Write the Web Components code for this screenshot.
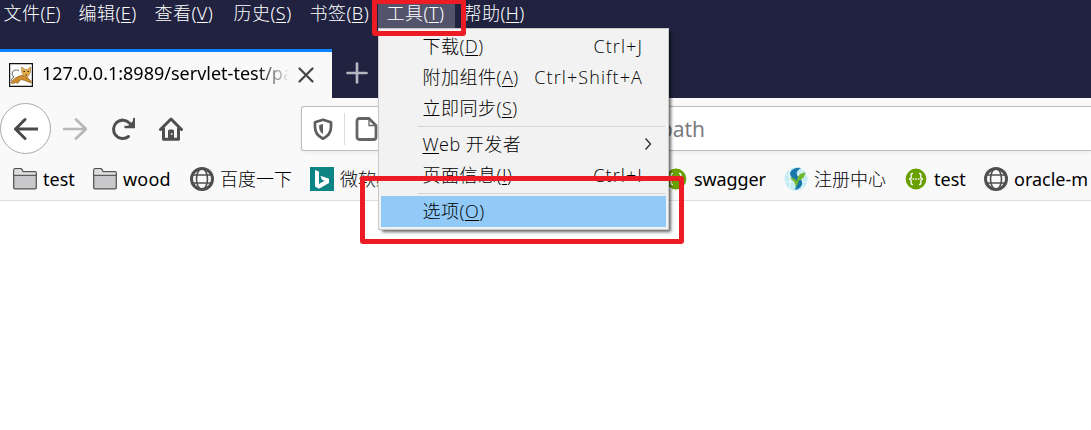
<!DOCTYPE html>
<html lang="zh-CN">
<head>
<meta charset="utf-8">
<title>Browser</title>
<style>
html,body{margin:0;height:100%;background:#fff;overflow:hidden}
body{font:18px/24px "Noto Sans","Noto Sans CJK SC",sans-serif;color:#000}
</style>
</head>
<body>
<browser-window></browser-window>
<script>
const define = (name, html, init) => customElements.define(name, class extends HTMLElement {
  connectedCallback() {
    if (this.shadowRoot) return;
    const t = document.createElement('template');
    t.innerHTML = html;
    const root = this.attachShadow({ mode: 'open' });
    root.append(t.content.cloneNode(true));
    if (init) init(this, root);
  }
});

const icons = {
  back: '<g fill="none" stroke="#4a4a4c" stroke-width="3" stroke-linecap="round" stroke-linejoin="round"><path d="M1.500 12H23.500M11 2.500L1.500 12L11 21.500"/></g>',
  forward: '<g fill="none" stroke="#b7b7b9" stroke-width="2.700" stroke-linecap="round" stroke-linejoin="round"><path d="M1 12H23M13 2.500L23 12L13 21.500"/></g>',
  reload: '<path d="M17.500 19.500A9.200 9.200 0 1 1 18.600 6.200" fill="none" stroke="#4f4f51" stroke-width="3" stroke-linecap="round"/><path d="M23.200 2V10H14.500" fill="none" stroke="#4f4f51" stroke-width="2.500" stroke-linejoin="round" stroke-linecap="round"/><path d="M23 3V10H16Z" fill="#4f4f51"/>',
  home: '<path d="M1.500 12.500L12 2L22.500 12.500M4.500 11V22.300H19.500V11" fill="none" stroke="#4f4f51" stroke-width="3" stroke-linecap="round" stroke-linejoin="round"/><path d="M9 22V14Q9 12.500 10.500 12.500H13.500Q15 12.500 15 14V22Z" fill="#4f4f51"/><circle cx="12.700" cy="17" r="1" fill="#ddd"/>',
  shield: '<path d="M12 2.800L20 5.300V10C20 15.500 17.500 19 12 21.700C6.500 19 4 15.500 4 10V5.300Z" fill="none" stroke="#5d5d5f" stroke-width="2.700" stroke-linejoin="round"/><path d="M12 7V17C9.500 15.500 8.200 13.500 8.200 10.500V8Z" fill="#5d5d5f"/>',
  page: '<path d="M4.500 1.500H14L21 8.500V20Q21 22.500 18.500 22.500H4.500Q2 22.500 2 20V4Q2 1.500 4.500 1.500Z" fill="none" stroke="#656567" stroke-width="2.800" stroke-linejoin="round"/><path d="M14 2V8.500H20.500" fill="none" stroke="#656567" stroke-width="1.300"/>',
  folder: '<path d="M.7 20.500V3.200Q.7 1.700 2.200 1.700H7.500Q8.700 1.700 9.200 2.700L10.200 4.700H22Q23.300 4.700 23.300 6V20.500Q23.300 21.800 22 21.800H2Q.7 21.800.7 20.500Z" fill="#c9c9cb" stroke="#505052" stroke-width="1.250"/><path d="M.7 8.300H23.300" stroke="#505052" stroke-width="1.200"/><path d="M1.400 7.500V3Q1.400 2.300 2.200 2.300H7.500L9.500 5.500H22.500V7.500Z" fill="#dededf"/>',
  globe: '<g fill="none" stroke="#4f4f51"><circle cx="12" cy="12" r="10.500" stroke-width="3"/><ellipse cx="12" cy="12" rx="5.500" ry="10.500" stroke-width="1.600"/><path d="M2.500 8H21.500M2.500 16H21.500" stroke-width="1.600"/></g>',
  bing: '<path fill="#0c8484" d="M0 0H24V24H0Z"/><path fill="#fff" d="M5 3L9 4.400V17L14.500 13.800L11.900 12.600L10.400 8.800L19 11.800V16L9 21.700L5 19.500Z"/>',
  swagger: '<circle cx="12" cy="12" r="10.400" fill="#6a9f00"/><g fill="none" stroke="#fff" stroke-width="1.300"><path d="M9 6.500C6.500 6.300 7.200 8 7.200 10Q7.200 12 5 12Q7.200 12 7.200 14C7.200 16 6.500 17.700 9 17.500M15 6.500C17.500 6.300 16.800 8 16.800 10Q16.800 12 19 12Q16.800 12 16.800 14C16.800 16 17.500 17.700 15 17.500"/><path d="M8.700 12H15.500" stroke-dasharray="1.500 1.200"/></g>',
  registry: '<circle cx="12" cy="12" r="11.500" fill="#c4ebf3"/><path d="M1 8H23M1 15H23M6 2V21M18 3V21" stroke="#e8fafd" stroke-width="1.200"/><path fill="#1877ab" d="M17 1C9 0 4 5 7 9.500C9.500 13 14.500 14.500 11 23C18 21.500 20.500 15.500 16 11.500C12 8 11 4.500 17 1Z"/><path fill="#72b72d" d="M11.500 20C12.500 15 8 14 6 10.500C10 11 12 12 13 14.500C13 9 16 6 21.500 5.500C20.500 10.500 18 13 14.500 13.500Q14.500 17.500 11.500 20Z"/>',
  tomcat: '<path fill="#fff" stroke="#111" stroke-width="1.200" d="M.6.6H23.400V23.400H.6Z"/><path d="M10 7.500Q5 6 3.500 9T5 14Q2.500 15 2 18" fill="none" stroke="#555" stroke-width=".9"/><path fill="#cf8a2a" stroke="#6c501c" stroke-width=".5" d="M1.500 20Q5 14.500 11.500 12.500L14 12.500L18 14L22.500 18.500L22 20L15.500 17.500L12 16.500L8.500 20.500L7 19.500L4 20.500Z"/><path fill="#e3ad4c" stroke="#8a6420" stroke-width=".5" d="M12.500 4L16 6.500H18.500L21.500 4L21.500 9L19.500 13L17 14.500L14.500 13L12.800 9Z"/><path d="M14.500 8.500h1.500M18.500 8.500h1.500M16.500 12h1.500" stroke="#222"/>',
  close: '<path d="M5.500 5.500L18.500 18.500M18.500 5.500L5.500 18.500" stroke="#47474a" stroke-width="2.300" stroke-linecap="round"/>',
  plus: '<path d="M12 2.500V21.500M2.500 12H21.500" stroke="#b6b6c1" stroke-width="2.700" stroke-linecap="round"/>',
  chevron: '<path d="M9.500 6.500L14.500 12L9.500 17.500" fill="none" stroke="#333" stroke-width="1.400"/>'
};

define('ui-icon', '<style>:host{display:block;width:24px;height:24px;flex:none}svg{display:block;width:100%;height:100%}</style><svg viewBox="0 0 24 24" aria-hidden="true"></svg>', (el, root) => {
  root.querySelector('svg').innerHTML = icons[el.getAttribute('name')];
});

define('menu-title', `<style>
:host{display:block;box-sizing:border-box;width:var(--w);height:28px;padding-left:var(--pad,8.500px);flex:none;white-space:nowrap;line-height:27px;color:#fff;font-weight:300;letter-spacing:.45px}
:host([active]){background:#53546c}
</style><slot></slot>`);

define('menu-bar', `<style>
:host{display:flex;height:28px;background:#20223f}
u{text-decoration-thickness:1px;text-underline-offset:2px}
</style>
<menu-title style="--w:70px;--pad:3.500px">文件(<u>F</u>)</menu-title>
<menu-title style="--w:76px">编辑(<u>E</u>)</menu-title>
<menu-title style="--w:79px">查看(<u>V</u>)</menu-title>
<menu-title style="--w:76px">历史(<u>S</u>)</menu-title>
<menu-title style="--w:77px">书签(<u>B</u>)</menu-title>
<menu-title active style="--w:77px">工具(<u>T</u>)</menu-title>
<menu-title style="--w:80px">帮助(<u>H</u>)</menu-title>`);

define('tab-strip', `<style>
:host{display:flex;height:70px;align-items:flex-end;background:#20223f}
.tab{display:flex;align-items:center;box-sizing:border-box;width:332px;height:49px;border-top:3px solid #0a84ff;background:#f9f9fa;padding-left:9px}
.label{width:250px;margin:-5px 0 0 9px;white-space:nowrap;-webkit-mask-image:linear-gradient(90deg,#000 86%,transparent 99%);mask-image:linear-gradient(90deg,#000 86%,transparent 99%)}
.close{margin-left:2px}.plus{margin:0 0 13px 13px}
</style>
<div class="tab"><ui-icon name="tomcat"></ui-icon><div class="label">127.0.0.1:8989/servlet-test/pa</div><ui-icon class="close" name="close"></ui-icon></div>
<ui-icon class="plus" name="plus"></ui-icon>`);

define('nav-bar', `<style>
:host{display:flex;align-items:center;height:61px;background:#f9f9fa}
.back{display:flex;align-items:center;justify-content:center;box-sizing:border-box;width:51px;height:51px;border:1px solid #ababad;border-radius:50%;background:#fff;flex:none}
.f{margin-left:12px}.r{margin-left:24px}.h{margin-left:24px}
.url{display:flex;align-items:center;box-sizing:border-box;height:45px;flex:1;margin-left:118px;border:1px solid #bdbdbf;border-right:0;border-radius:3px 0 0 3px;background:#fff;box-shadow:0 1px 4px #0001}
.shield{margin-left:9px}.line{width:1px;height:32px;background:#ddd;margin:0 10px 0 9px}
.text{margin-left:273px;font-size:21px;line-height:28px;color:#7b7b7d}
</style>
<div class="back"><ui-icon name="back"></ui-icon></div>
<ui-icon class="f" name="forward"></ui-icon><ui-icon class="r" name="reload"></ui-icon><ui-icon class="h" name="home"></ui-icon>
<div class="url"><ui-icon class="shield" name="shield"></ui-icon><div class="line"></div><ui-icon name="page"></ui-icon><div class="text">/path</div></div>`);

define('book-mark', `<style>
:host{display:flex;align-items:center;box-sizing:border-box;width:var(--w);flex:none;white-space:nowrap;font-weight:var(--fw,400)}
span{margin-left:6.500px;letter-spacing:var(--ls,0)}
</style><ui-icon></ui-icon><span><slot></slot></span>`, (el, root) => {
  const i = document.createElement('ui-icon');
  i.setAttribute('name', el.getAttribute('icon'));
  root.querySelector('ui-icon').replaceWith(i);
});

define('bookmark-bar', `<style>
:host{display:flex;box-sizing:border-box;height:42px;padding:0 0 2px 12.500px;overflow:hidden;background:#f9f9fa;border-bottom:1px solid #dedede}
</style>
<book-mark icon="folder" style="--w:80px">test</book-mark>
<book-mark icon="folder" style="--w:97px;--ls:.2px">wood</book-mark>
<book-mark icon="globe" style="--w:120px;--fw:300">百度一下</book-mark>
<book-mark icon="bing" style="--w:354px;--fw:300">微软必应</book-mark>
<book-mark icon="swagger" style="--w:120px;--ls:-.1px">swagger</book-mark>
<book-mark icon="registry" style="--w:120px;--fw:300">注册中心</book-mark>
<book-mark icon="swagger" style="--w:80px">test</book-mark>
<book-mark icon="globe" style="--w:107px">oracle-m</book-mark>`);

define('menu-item', `<style>
:host{display:flex;align-items:center;box-sizing:border-box;height:31px;padding:0 23px 2px 41.500px;margin:0 2px;white-space:nowrap;font-family:"Open Sans","Noto Sans CJK SC",sans-serif;font-weight:300;color:#000;letter-spacing:.5px}
:host([selected]){background:#91c9f7}
.key{margin-left:auto;letter-spacing:1.100px}
</style><slot></slot><span class="key"><slot name="key"></slot></span>`);

define('menu-separator', '<style>:host{display:block;height:1px;margin:2px 3px 2px 39px;background:#d5d5d5}</style>');

define('tools-menu', `<style>
:host{display:block;box-sizing:border-box;width:291px;height:202px;padding-top:2px;background:#f2f2f2;border:1px solid #c9c9c9;box-shadow:3px 3px 3px -1px #0009}
u{text-decoration-thickness:1px;text-underline-offset:2px}
ui-icon{margin-right:-17px}
</style>
<menu-item>下载(<u>D</u>)<span slot="key">Ctrl+J</span></menu-item>
<menu-item>附加组件(<u>A</u>)<span slot="key">Ctrl+Shift+A</span></menu-item>
<menu-item>立即同步(<u>S</u>)</menu-item>
<menu-separator></menu-separator>
<menu-item><span><u>W</u>eb 开发者</span><ui-icon slot="key" name="chevron"></ui-icon></menu-item>
<menu-item>页面信息(<u>I</u>)<span slot="key">Ctrl+I</span></menu-item>
<menu-separator></menu-separator>
<menu-item selected>选项(<u>O</u>)</menu-item>`);

define('mark-box', '<style>:host{display:block;box-sizing:border-box;border:5px solid #ed1c24;border-radius:3px}</style>');

define('browser-window', `<style>
:host{display:block;position:relative;width:1091px;height:430px;overflow:hidden;background:#fff}
tools-menu{position:absolute;left:378px;top:28px}
.one{position:absolute;left:372px;top:-1px;width:94px;height:37px}
.two{position:absolute;left:360px;top:176px;width:324px;height:68px}
</style>
<menu-bar></menu-bar><tab-strip></tab-strip><nav-bar></nav-bar><bookmark-bar></bookmark-bar>
<tools-menu></tools-menu><mark-box class="one"></mark-box><mark-box class="two"></mark-box>`);
</script>
</body>
</html>
